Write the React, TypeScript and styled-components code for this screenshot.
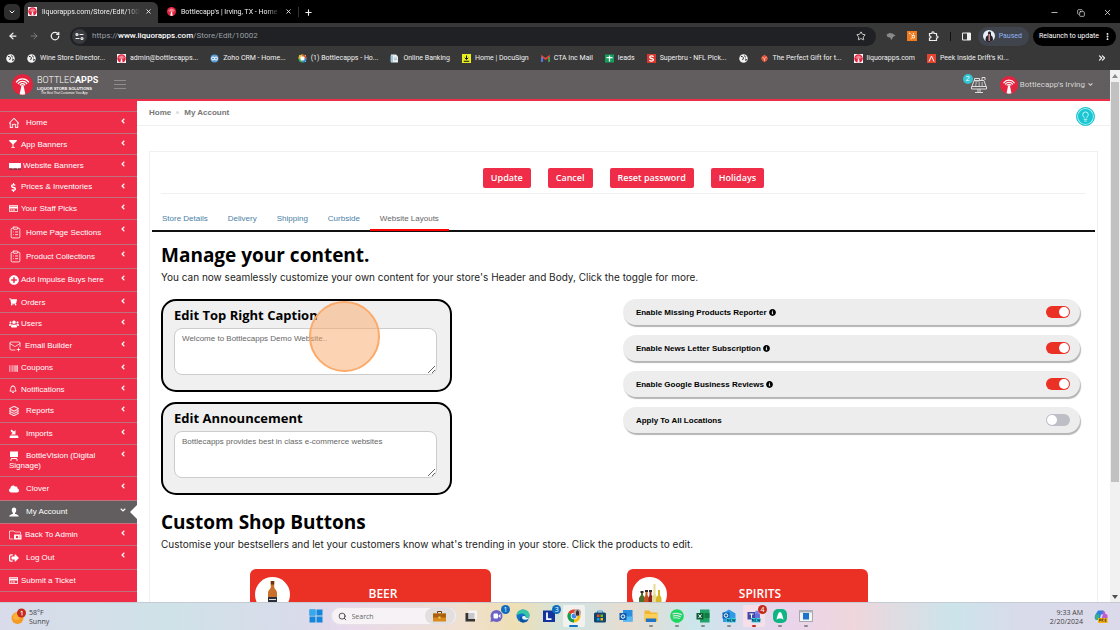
import React from "react";
import styled, { createGlobalStyle, css } from "styled-components";
import {
  FaAngleDown, FaAngleLeft, FaBarcode, FaCloud, FaDollarSign, FaGlassMartini, FaInfoCircle,
  FaPlusCircle, FaRegBell, FaRegCreditCard, FaShoppingCart, FaSignOutAlt, FaUsers, FaHubspot, FaSpotify,
} from "react-icons/fa";
import { SlHome, SlLayers } from "react-icons/sl";
import {
  ArrowLeft, ArrowRight, ChevronDown, ChevronsRight, Copy, Lightbulb, Minus, MoreVertical,
  Plus, RotateCw, Search, Star, X, ClipboardList, MailPlus,
} from "lucide-react";

const ui = `"Open Sans", "Noto Sans", sans-serif`;
const chromeUi = `Roboto, "Open Sans", sans-serif`;
const arial = `"Liberation Sans", Arial, sans-serif`;
const red = "#ef2d49";
const grey = "#625d5e";
const flame = "#eb3126";

const Global = createGlobalStyle`
  *, *::before, *::after { box-sizing: border-box; }
  body { margin: 0; background: #fff; font-family: ${arial}; }
  button, textarea, input { font: inherit; }
  button { border: 0; padding: 0; margin: 0; background: none; color: inherit; }
  a { color: inherit; text-decoration: none; }
  svg { display: block; flex: none; }
`;

const Desktop = styled.div`
  height: 100vh;
  display: flex;
  flex-direction: column;
  overflow: hidden;
`;

/* ---------- browser frame ---------- */

const TabStrip = styled.div`
  display: flex;
  align-items: flex-end;
  height: 23px;
  flex: none;
  padding-left: 4px;
  background: #000;
  color: #f2f2f2;
  font: 7px/10px ${chromeUi};
`;
const TabSearch = styled.button`
  display: grid;
  place-items: center;
  width: 16px;
  height: 16px;
  margin: 0 4px 3px 0;
  border-radius: 5px;
  background: #2e2e2e;
`;
const BrowserTab = styled.div<{ $active?: boolean }>`
  display: flex;
  align-items: center;
  gap: 5px;
  width: ${(p) => (p.$active ? 134 : 140)}px;
  height: 21px;
  padding: 0 6px 2px ${(p) => (p.$active ? 4 : 9)}px;
  border-radius: 6px 6px 0 0;
  background: ${(p) => (p.$active ? "#383838" : "transparent")};
`;
const TabTitle = styled.span`
  flex: 1;
  overflow: hidden;
  white-space: nowrap;
  mask-image: linear-gradient(90deg, #000 86%, transparent);
`;
const NewTab = styled.button`
  height: 10px;
  margin-bottom: 6px;
  padding-left: 5px;
  border-left: 1px solid #333;
`;
const WindowControls = styled.div`
  display: flex;
  align-items: center;
  gap: 18px;
  margin: 0 8px 6px auto;
`;
const Toolbar = styled.div`
  display: flex;
  align-items: center;
  height: 26px;
  flex: none;
  padding: 0 4px 0 8px;
  background: #383838;
  color: #f2f2f2;
  font: 7px/10px ${chromeUi};
`;
const NavButtons = styled.div`
  display: flex;
  gap: 11px;
  margin-right: 10px;
`;
const Omnibox = styled.div`
  display: flex;
  align-items: center;
  flex: 1;
  height: 19px;
  padding: 0 10px 0 2px;
  border-radius: 10px;
  background: #202124;
  color: #9aa0a6;
  font-size: 8px;
`;
const SiteInfo = styled.button`
  display: grid;
  place-items: center;
  width: 15px;
  height: 15px;
  margin-right: 5px;
  border-radius: 8px;
  background: #383a3d;
`;
const Address = styled.span`
  flex: 1;
  b { font-weight: 500; color: #fff; }
`;
const Extensions = styled.div`
  display: flex;
  align-items: center;
  gap: 11px;
  margin: 0 7px 0 10px;
`;
const Divider = styled.i`
  width: 1px;
  height: 9px;
  background: #111;
`;
const Pill = styled.button<{ $dark?: boolean }>`
  display: flex;
  align-items: center;
  gap: 4px;
  height: 19px;
  margin-left: ${(p) => (p.$dark ? 4 : 0)}px;
  padding: 0 ${(p) => (p.$dark ? 4 : 7)}px 0 ${(p) => (p.$dark ? 6 : 5)}px;
  border-radius: 10px;
  background: ${(p) => (p.$dark ? "#000" : "#40444c")};
  color: ${(p) => (p.$dark ? "#fff" : "#8fb4f5")};
  white-space: nowrap;
`;
const Bookmarks = styled.nav`
  display: flex;
  align-items: center;
  gap: 12px;
  height: 21px;
  flex: none;
  padding: 0 13px 3px 6px;
  background: #383838;
  color: #f2f2f2;
  font: 7px/10px ${chromeUi};
  white-space: nowrap;
`;
const Bookmark = styled.a`
  display: flex;
  align-items: center;
  gap: 4px;
`;
const More = styled.button`
  margin-left: auto;
`;

/* ---------- site ---------- */

const Viewport = styled.div`
  display: flex;
  flex: 1;
  min-height: 0;
`;
const Site = styled.div`
  display: flex;
  flex-direction: column;
  flex: 1;
  min-width: 0;
  overflow: hidden;
`;
const Scrollbar = styled.div`
  display: flex;
  flex-direction: column;
  align-items: center;
  justify-content: space-between;
  width: 10px;
  padding: 4px 0 3px;
  background: #f1f1f1;
`;
const Thumb = styled.i`
  width: 8px;
  flex: 0 0 400px;
  margin: 4px 0 auto;
  background: #c1c1c1;
`;
const SiteHeader = styled.header`
  display: flex;
  align-items: center;
  height: 31px;
  flex: none;
  padding: 0 16px 0 12px;
  border-bottom: 2px solid ${red};
  background: ${grey};
  color: #d5d5d5;
  font: 8px/10px ${chromeUi};
`;
const Brand = styled.a`
  display: flex;
  align-items: center;
  gap: 4px;
  width: 102px;
  color: #fff;
`;
const Wordmark = styled.span`
  display: flex;
  flex-direction: column;
  white-space: nowrap;
  font: 300 9px/11px ${chromeUi};
  b { font-weight: 700; }
  small { font: 700 4px/5px ${arial}; }
  em { padding-left: 4px; font: 3px/4px ${arial}; }
`;
const Notifications = styled.button`
  position: relative;
  margin: 0 13px 0 auto;
`;
const Count = styled.span`
  position: absolute;
  left: -8px;
  top: -2px;
  width: 10px;
  height: 10px;
  border-radius: 5px;
  background: #32c5d2;
  color: #fff;
  font: 7px/10px ${arial};
  text-align: center;
`;
const Account = styled.button`
  display: flex;
  align-items: center;
  gap: 2px;
`;
const Columns = styled.div`
  display: flex;
  flex: 1;
  min-height: 0;
`;
const Sidebar = styled.nav`
  width: 137px;
  flex: none;
  padding-top: 10px;
  background: ${red};
  color: #fff;
  font-size: 8px;
  line-height: 9px;
`;
const line = "#c0707e";
const MenuItem = styled.a<{ $height: number; $active?: boolean }>`
  position: relative;
  display: flex;
  align-items: center;
  min-height: ${(p) => p.$height}px;
  padding: 0 10px 0 9px;
  border-top: 1px solid ${line};
  ${(p) => p.$active && css`
    background: ${grey};
    &::after {
      content: "";
      position: absolute;
      right: 0;
      top: 4px;
      border: 7px solid transparent;
      border-left-width: 0;
      border-right-color: #fff;
    }
  `}
`;
const MenuLabel = styled.span`
  flex: 1;
`;
const MenuIcon = styled.span<{ $width: number }>`
  display: inline-block;
  vertical-align: middle;
  width: ${(p) => p.$width}px;
`;
const Caret = styled.span`
  align-self: flex-start;
  padding-top: 5px;
`;
const MenuEnd = styled.div`
  border-top: 1px solid ${line};
`;
const Main = styled.main`
  flex: 1;
  min-width: 0;
  overflow: hidden;
`;
const Crumbs = styled.div`
  display: flex;
  align-items: center;
  gap: 5px;
  height: 25px;
  padding: 0 15px 2px 12px;
  border-bottom: 1px solid #f0f0f0;
  color: #777;
  font-size: 8px;
  font-weight: 700;
`;
const Dot = styled.i`
  width: 3px;
  height: 3px;
  border-radius: 2px;
  background: #ddd;
`;
const Tip = styled.button`
  display: grid;
  place-items: center;
  align-self: flex-start;
  flex: none;
  width: 19px;
  height: 19px;
  margin: 6px 0 0 auto;
  border-radius: 10px;
  border: 1px solid #19c6d2;
  background: #19c6d2;
  box-shadow: inset 0 0 0 1px #a8eef2;
  color: #d5fbfc;
`;
const Card = styled.section`
  margin: 25px 12px 0 12px;
  border: 1px solid #f0f0f0;
`;
const Actions = styled.div`
  display: flex;
  justify-content: center;
  gap: 17px;
  margin: 0 11px;
  padding: 16px 0 5px;
  border-bottom: 1px solid #f0f0f0;
`;
const Action = styled.button`
  height: 20px;
  padding: 0 8px;
  border-radius: 2px;
  background: ${red};
  color: #fff;
  font: 600 9px/20px ${ui};
`;
const Tabs = styled.div`
  display: flex;
  margin: 0 2px;
  padding-top: 13px;
  border-bottom: 2px solid #111;
  font-size: 8px;
`;
const Tab = styled.button<{ $active?: boolean }>`
  height: 24px;
  margin-bottom: -1px;
  padding: 0 10px;
  border: 0 solid ${(p) => (p.$active ? "#f00" : "transparent")};
  border-bottom-width: 2px;
  color: ${(p) => (p.$active ? "#666" : "#4a7fa8")};
`;
const Body = styled.div`
  padding: 0 11px;
`;
const Title = styled.h2`
  margin: 9px 0 0;
  color: #000;
  font: 700 19px/28px ${ui};
`;
const Lead = styled.p`
  margin: 0;
  color: #222;
  font: 10px/16px Inter, ${arial};
`;
const Settings = styled.div`
  display: grid;
  grid-template-columns: 7fr 11fr;
  gap: 171px;
  margin: 14px 6px 13px 0;
`;
const Stack = styled.div`
  display: flex;
  flex-direction: column;
  gap: 10px;
`;
const Editor = styled.div`
  position: relative;
  padding: 4px 13px 15px 11px;
  border: 2px solid #000;
  border-radius: 15px;
  background: #f0f0f0;
`;
const EditorLabel = styled.label`
  display: block;
  font: 700 13px/20px ${ui};
  color: #000;
`;
const EditorText = styled.textarea`
  display: block;
  width: 100%;
  height: 47px;
  margin-top: 3px;
  padding: 5px 7px;
  border: 1px solid #ccc;
  border-radius: 8px;
  background: #fff;
  color: #666;
  font-size: 8px;
  line-height: 10px;
  overflow: hidden;
`;
const ClickMark = styled.div`
  position: absolute;
  left: 146px;
  top: 0;
  width: 71px;
  height: 71px;
  border: 2px solid #fbaa6a;
  border-radius: 50%;
  background: rgba(250, 170, 105, 0.5);
  pointer-events: none;
`;
const Toggle = styled.label`
  display: flex;
  align-items: center;
  gap: 2px;
  height: 26px;
  padding: 0 10px 0 13px;
  border-radius: 13px;
  background: #ededed;
  box-shadow: 1px 2px 1px #b5b5b5;
  color: #000;
  font-size: 8px;
  font-weight: 700;
`;
const Switch = styled.input`
  appearance: none;
  width: 24px;
  height: 12px;
  margin: 0 0 0 auto;
  padding: 1px;
  border-radius: 6px;
  background: #bdbec6;
  &::before {
    content: "";
    display: block;
    width: 10px;
    height: 10px;
    border-radius: 5px;
    background: #fff;
  }
  &:checked { background: ${flame}; }
  &:checked::before { margin-left: 12px; }
`;
const Shops = styled.div`
  display: flex;
  gap: 136px;
  margin-top: 17px;
  padding-left: 89px;
`;
const Shop = styled.button`
  display: flex;
  align-items: center;
  width: 241px;
  height: 50px;
  padding: 0 15px 0 5px;
  border-radius: 6px;
  background: ${flame};
  color: #fff;
  font: 600 12px/16px ${ui};
`;
const ShopName = styled.span`
  flex: 1;
`;

/* ---------- taskbar ---------- */

const Taskbar = styled.footer`
  display: grid;
  grid-template-columns: 1fr auto 1fr;
  align-items: center;
  height: 28px;
  flex: none;
  border-top: 1px solid #c5cbd3;
  background: linear-gradient(90deg, #d9dbea 0, #cfe2e8 15%, #d9dbea 27%, #e8d9ec 31%, #f0e0d0 41%, #efdfb4 46%, #cfe4e4 51%, #e8dccf 56%, #cbe6ec 62%, #ead4ec 70%, #efd6dc 76%, #cbe4ea 85%, #d9dbea 91%, #dcdaea);
  color: #444;
  font: 7px/9px ${ui};
`;
const Weather = styled.div`
  display: flex;
  align-items: center;
  gap: 3px;
  padding-left: 11px;
`;
const Apps = styled.div`
  display: flex;
  align-items: center;
  padding: 0 0 1px 7px;
`;
const SearchBox = styled.label`
  display: flex;
  align-items: center;
  gap: 5px;
  width: 126px;
  height: 18px;
  margin: 0 2px 0 8px;
  padding: 0 1px 0 6px;
  border-radius: 9px;
  background: #f6f2f5;
  border: 1px solid #e6e0e6;
  color: #222;
  input {
    flex: 1;
    min-width: 0;
    padding: 0;
    border: 0;
    outline: 0;
    background: none;
    &::placeholder { color: #666; }
  }
`;
const Case = styled.span`
  display: grid;
  place-items: center;
  width: 30px;
  height: 16px;
  border-radius: 8px;
  background: #e4dfdf;
`;
const Dock = styled.div`
  display: flex;
  width: 360px;
`;
const DockApp = styled.button<{ $mark?: string; $bg?: string }>`
  position: relative;
  display: grid;
  place-items: center;
  flex: 1;
  height: 22px;
  border-radius: 3px;
  background: ${(p) => p.$bg ?? "transparent"};
  background-clip: content-box;
  padding: 0 2px;
  ${(p) => p.$mark && css`
    &::after {
      content: "";
      position: absolute;
      left: calc(50% - ${p.$mark === "#1275c4" ? 5 : 2}px);
      bottom: 0;
      width: ${p.$mark === "#1275c4" ? 9 : 4}px;
      height: 2px;
      border-radius: 1px;
      background: ${p.$mark};
    }
  `}
`;
const Badge = styled.b<{ $color: string }>`
  position: absolute;
  right: 0;
  top: 0;
  width: 9px;
  height: 9px;
  border-radius: 5px;
  background: ${(p) => p.$color};
  color: #fff;
  font: 7px/9px ${ui};
  text-align: center;
`;
const Tray = styled.div`
  display: flex;
  justify-content: flex-end;
  align-items: center;
  gap: 11px;
  padding-right: 12px;
  text-align: right;
`;

/* ---------- drawings ---------- */

const Globe = () => (
  <svg width="9" height="9" viewBox="0 0 18 18"><circle cx="9" cy="9" r="8.5" fill="#f1f1f1" /><path d="M4 5c3 0 5 1 5 3s-2 2-2 4M11 3c0 2 1 3 3 3M12 10l3 1-2 3" fill="none" stroke="#333" strokeWidth="2" /></svg>
);
const Tower = ({ size = 9, square = false }: { size?: number; square?: boolean }) => (
  <svg width={size} height={size} viewBox="0 0 20 20">
    {square ? <rect width="20" height="20" fill="#fff" /> : null}
    <circle cx="10" cy="10" r={square ? 9.4 : 10} fill="#e5233f" />
    <g fill="none" stroke="#fff" strokeWidth="1.3" strokeLinecap="round">
      <path d="M4.2 7.6C7 3.6 13 3.6 15.8 7.6M6 9C8 6.3 12 6.3 14 9M7.9 10.2c1.2-1.4 3-1.4 4.2 0" />
    </g>
    <path d="M9.1 10.4h1.8l1.8 8.9a10 10 0 0 1-5.4 0z" fill="#fff" />
  </svg>
);
const Mark = ({ kind }: { kind: string }) => {
  const art: Record<string, React.ReactNode> = {
    zoho: <><circle cx="9" cy="9" r="8" fill="#5b9bd5" /><path d="M3 9a3 3 0 0 1 6 0 3 3 0 0 0 6 0 3 3 0 0 0-6 0 3 3 0 0 1-6 0z" fill="none" stroke="#fff" strokeWidth="2" /></>,
    ring: <><path d="M2 2h14v14H9z" fill="#fff" /><circle cx="9" cy="9" r="8" fill="#3cae5a" /><path d="M9 1a8 8 0 0 1 8 8H9z" fill="#e14b3b" /><path d="M1 9a8 8 0 0 1 8-8v8z" fill="#f3b62c" /><path d="M9 17a8 8 0 0 0 8-8H9z" fill="#357fd0" /><rect x="5" y="5" width="8" height="8" rx="2" fill="#fff" /></>,
    bank: <><path d="M2 1h10l4 4v12H2z" fill="#e8eef2" /><path d="M1 3h5v13H1z" fill="#9fc3d8" /><path d="M8 8h6M8 11h6" stroke="#9ab" strokeWidth="1.4" /></>,
    docu: <><path d="M0 0h18v18H0z" fill="#e9ee1f" /><path d="M9 3v7M5.500 7.500L9 11l3.500-3.500M3.500 14.500h11" stroke="#111" strokeWidth="2" fill="none" /></>,
    gmail: <><path d="M2 15V5l7 5 7-5v10" fill="none" stroke="#ea4335" strokeWidth="3.400" /><path d="M2 16V6" stroke="#4285f4" strokeWidth="3.400" /><path d="M16 16V6" stroke="#34a853" strokeWidth="3.400" /></>,
    sheet: <><path d="M0 1h18v16H0z" fill="#12a05c" /><path d="M3 7h12M9 3v12" stroke="#fff" strokeWidth="2.500" /></>,
    bru: <><path d="M0 0h18v18H0z" fill="#d9372c" /><path d="M13 5.500C11 3 5.500 3.500 5.500 6.300c0 3.400 7.300 2 7.300 5.300 0 3-5.800 3.400-8 .6" fill="none" stroke="#fff" strokeWidth="2.600" /></>,
    gift: <><path d="M9 1l7 8-7 8-7-8z" fill="#e0563c" /><circle cx="9" cy="9" r="6" fill="#e0563c" /><path d="M5 7l4 2 4-3M9 9v5" stroke="#f5b6a4" strokeWidth="2" fill="none" /></>,
    drift: <><path d="M0 0h18v18H0z" fill="#e5432e" /><path d="M4 15L9 4l5 11" fill="none" stroke="#fff" strokeWidth="2" /></>,
  };
  return <svg width="9" height="9" viewBox="0 0 18 18">{art[kind]}</svg>;
};
const Register = () => (
  <svg width="16" height="17" viewBox="0 0 32 34" fill="none" stroke="#dcdcdc" strokeWidth="2">
    <path d="M6 9h20l4 12H2zM1 21h30v5H1zM14 26v6M18 26v6M8 33h16M22 9V3h6v5M7 5h10v5H7z" /><path d="M9 14h3M15 14h3M21 14h3M8 18h3M15 18h3M21 18h3" />
  </svg>
);
const Screen = () => (
  <svg width="12" height="8" viewBox="0 0 24 16"><path d="M0 2h24v11H0z" fill="#fff" /><path d="M0 14h24" stroke="#333" strokeWidth="2" strokeDasharray="7 2" /></svg>
);
const Import = () => (
  <svg width="10" height="10" viewBox="0 0 20 20" fill="#fff"><path d="M5 1l5 4 3-3v9H4l3-3-4-4zM2 13h16l1 5H1z" /></svg>
);
const Signage = () => (
  <svg width="10" height="10" viewBox="0 0 20 20" fill="#fff"><path d="M2 1h16v11H2zM4 14h12v2H4zM2 17h5l-2 2H2zM13 17h5v2h-3z" /></svg>
);
const Person = () => (
  <svg width="10" height="10" viewBox="0 0 20 20" fill="#fff"><path d="M10 1c3 0 4.500 2 4.500 5S13 11 12 12v1.500c1 1 7 1.500 7.500 5.500H.5C1 15 7 14.500 8 13.500V12C7 11 5.500 9 5.500 6S7 1 10 1z" /></svg>
);
const Admin = () => (
  <svg width="13" height="10" viewBox="0 0 26 20"><path d="M9 18H1V2h9l2 2h11v4" fill="none" stroke="#fff" strokeWidth="1.400" /><path d="M10 9h15v10H10z" fill="#fff" /><circle cx="16" cy="14" r="2.500" fill={red} /><path d="M20 12h3M20 15h3" stroke={red} /></svg>
);
const Bottle = () => (
  <svg width="35" height="35" viewBox="0 0 35 35"><circle cx="17.500" cy="17.500" r="17.500" fill="#fff" /><path d="M15.800 4h3.400v6c0 2 2.800 3 2.800 6v16h-9V16c0-3 2.800-4 2.800-6z" fill="#c9702a" /><path d="M15.800 4h3.400v3.500h-3.400z" fill="#6b3318" /><path d="M13 20h9v7h-9z" fill="#2b2f3c" /><path d="M14 22.500h7" stroke="#ddd" /></svg>
);
const Bottles = () => (
  <svg width="35" height="35" viewBox="0 0 35 35"><circle cx="17.500" cy="17.500" r="17.500" fill="#fff" />
    <path d="M9 15h2v3l2 3v11H7V21l2-3z" fill="#49702c" /><path d="M13.500 14h2v4l1.500 3v11h-5V21l1.500-3z" fill="#c6541f" /><path d="M17.500 15h2v3l2 3v11h-5V21l1-3z" fill="#8c1f22" /><path d="M21.500 7h2v10l1.500 3v12h-5V20l1.500-3z" fill="#e6dc8e" /><path d="M26 13h2v5l1.500 3v9H24v-9l2-3z" fill="#d8b62a" /><path d="M8.500 14h3v2h-3zM17 13h3v2h-3zM13 13h3v2h-3z" fill="#3a2a24" /></svg>
);
const Sun = () => (
  <svg width="15" height="17" viewBox="0 0 30 34"><circle cx="13" cy="20" r="12" fill="#f59a23" /><circle cx="11" cy="17" r="7" fill="#fbb03b" /><circle cx="21" cy="10" r="9" fill="#c42b1c" /><path d="M19 8l3-2v9" stroke="#fff" strokeWidth="1.800" fill="none" /></svg>
);
const Copilot = () => (
  <svg width="14" height="15" viewBox="0 0 28 30"><path d="M8 3h9c3 0 4 4 5 7l-8 1-3 11H6c-4 0-6-4-4-9z" fill="#2f7fe0" /><path d="M17 3c4 0 5 3 6 7 4 0 5 3 4 7l-2 6H14l4-13z" fill="#c15bd0" /><path d="M3 11l8 0-3 11c-5 1-7-4-5-11z" fill="#36b37e" /><path d="M8 18h19v10H8z" fill="#f6b21b" /><path d="M11 25v-5h3v3h-3M16 25v-5h3l-3 3 3 2M25 20h-3v5h3M22 22.500h3" fill="none" stroke="#4a3208" strokeWidth="1.200" /></svg>
);
const Logo = ({ kind }: { kind: string }) => {
  const art: Record<string, React.ReactNode> = {
    start: <><path d="M1 1h12v12H1zM15 1h12v12H15zM1 15h12v12H1zM15 15h12v12H15z" fill="#1486dc" /><path d="M1 1h12v12H1z" fill="#35a8ee" /></>,
    tasks: <><path d="M9 3h17v17H9z" fill="#f5f5f5" /><path d="M3 8h6v12h13v5H3z" fill="#333" /><path d="M9 8h12v12H9z" fill="#c8c8c8" /></>,
    chat: <><circle cx="13" cy="14" r="12" fill="#6b63c8" /><path d="M2 18l-1 8 8-2z" fill="#6b63c8" /><rect x="7" y="9" width="9" height="10" rx="2" fill="#fff" /><path d="M17 13l4-3v8l-4-3z" fill="#fff" /></>,
    edge: <><circle cx="14" cy="14" r="13" fill="#1473c8" /><path d="M1 13C2 5 8 1 14 1c8 0 13 6 13 11 0 4-3 6-7 6 0-6-3-9-8-9-5 0-9 2-11 4z" fill="#38c7a5" /><path d="M11 14c-1 6 4 9 9 9 2 0 4 0 5-1-2 3-6 5-11 5C7 27 5 17 11 14z" fill="#0f4f9c" /><path d="M12 17c0-4 8-5 8 1 4 0 6-1 7-3 0 7-14 9-15 2z" fill="#e8f3f6" /></>,
    L: <><path d="M2 3h24v23H2z" fill="#13349c" /><path d="M10 7v13h9" stroke="#fff" strokeWidth="3.500" fill="none" /></>,
    chrome: <><circle cx="14" cy="14" r="13" fill="#f4c20d" /><path d="M14 14L2.700 7.500A13 13 0 0 1 25.300 7.500z" fill="#db4437" /><path d="M14 14L2.700 7.500A13 13 0 0 0 14 27z" fill="#0f9d58" /><circle cx="14" cy="14" r="6.500" fill="#fff" /><circle cx="14" cy="14" r="5" fill="#4285f4" /><circle cx="21" cy="7" r="7" fill="#b9a9a4" /><path d="M18 13V5l3-3 3 3v8z" fill="#3a2c30" /></>,
    store: <><path d="M9 8V4h10v4" stroke="#3aa0e8" strokeWidth="2" fill="none" /><rect x="2" y="7" width="24" height="20" rx="3" fill="#12456e" /><path d="M8 11h5v5H8z" fill="#f25022" /><path d="M15 11h5v5h-5z" fill="#7fba00" /><path d="M8 18h5v5H8z" fill="#00a4ef" /><path d="M15 18h5v5h-5z" fill="#ffb900" /></>,
    outlook: <><path d="M8 2h19v23H8z" fill="#2a8fe0" /><path d="M8 15h19v10H8z" fill="#55b9f5" /><path d="M1 8h14v14H1z" fill="#0f5fb0" /><circle cx="8" cy="15" r="3.500" stroke="#fff" strokeWidth="2" fill="none" /></>,
    folder: <><path d="M1 3h10l3 4h13v18H1z" fill="#f2b632" /><path d="M1 10h26v9H1z" fill="#fbd05a" /><path d="M4 19h20v7H4z" fill="#2274c8" /></>,
    excel: <><path d="M8 1h19v26H8z" fill="#21a366" /><path d="M17 8h10v10H17z" fill="#107c41" /><path d="M1 8h14v13H1z" fill="#0e5c33" /><path d="M5 11l6 7M11 11l-6 7" stroke="#fff" strokeWidth="2" /></>,
    newmail: <><path d="M2 8L14 1l13 8v17H2z" fill="#2f9ae8" /><path d="M1 7h14v12H1z" fill="#0f5fb0" /><circle cx="8" cy="13" r="3.500" stroke="#fff" strokeWidth="2" fill="none" /><path d="M9 18h18v9H9z" fill="#36d3e8" /><path d="M11 25v-5l3 5v-5M19 20h-2.500v5H19M21 20l1 5 1.500-4 1.500 4 1-5" fill="none" stroke="#0a3550" strokeWidth="1.400" /></>,
    teams: <><circle cx="20" cy="7" r="4" fill="#7b83eb" /><path d="M10 9h16v12H10z" fill="#6a70d8" /><path d="M1 6h15v15H1z" fill="#4049a8" /><path d="M5 10h8M9 10v8" stroke="#fff" strokeWidth="2" /><path d="M9 18h18v9H9z" fill="#36d3e8" /><path d="M11 25v-5l3 5v-5M19 20h-2.500v5H19M21 20l1 5 1.500-4 1.500 4 1-5" fill="none" stroke="#0a3550" strokeWidth="1.400" /></>,
    a: <><rect width="28" height="28" rx="10" fill="#0fb583" /><path d="M7 21C9 12 11 6 14 6s5 6 7 15c-3-3-11-3-14 0z" fill="#fff" /></>,
    window: <><path d="M1 3h26v22H1z" fill="#f5f5f5" stroke="#8a929a" strokeWidth="1.500" /><path d="M1 3h26v4H1z" fill="#aeb4ba" /><path d="M8 8h12v13H8z" fill="#1c74cc" /></>,
  };
  return <svg width="14" height="14" viewBox="0 0 28 28">{art[kind]}</svg>;
};

/* ---------- data ---------- */

const bookmarks: [React.ReactNode, string][] = [
  [<Globe />, ""],
  [<Globe />, "Wine Store Director..."],
  [<Tower square />, "admin@bottlecapps..."],
  [<Mark kind="zoho" />, "Zoho CRM - Home..."],
  [<Mark kind="ring" />, "(1) Bottlecapps - Ho..."],
  [<Mark kind="bank" />, "Online Banking"],
  [<Mark kind="docu" />, "Home | DocuSign"],
  [<Mark kind="gmail" />, "CTA Inc Mail"],
  [<Mark kind="sheet" />, "leads"],
  [<Mark kind="bru" />, "Superbru - NFL Pick..."],
  [<Globe />, ""],
  [<Mark kind="gift" />, "The Perfect Gift for t..."],
  [<Tower square />, "liquorapps.com"],
  [<Mark kind="drift" />, "Peek Inside Drift's Ki..."],
];

type Entry = { name: string; icon: React.ReactNode; height: number; icw: number; active?: boolean };
const menu: Entry[] = [
  { name: "Home", icon: <SlHome size={10} strokeWidth={30} stroke="#fff" />, height: 22, icw: 17 },
  { name: "App Banners", icon: <FaGlassMartini size={8} />, height: 21, icw: 12 },
  { name: "Website Banners", icon: <Screen />, height: 22, icw: 14 },
  { name: "Prices & Inventories", icon: <FaDollarSign size={9} />, height: 21, icw: 12 },
  { name: "Your Staff Picks", icon: <FaRegCreditCard size={9} />, height: 22, icw: 12 },
  { name: "Home Page Sections", icon: <ClipboardList size={13} strokeWidth={1.5} />, height: 25, icw: 17 },
  { name: "Product Collections", icon: <ClipboardList size={13} strokeWidth={1.5} />, height: 24, icw: 17 },
  { name: "Add Impulse Buys here", icon: <FaPlusCircle size={10} />, height: 23, icw: 12 },
  { name: "Orders", icon: <FaShoppingCart size={8} />, height: 21, icw: 12 },
  { name: "Users", icon: <FaUsers size={10} />, height: 22, icw: 12 },
  { name: "Email Builder", icon: <MailPlus size={12} strokeWidth={1.5} />, height: 23, icw: 16 },
  { name: "Coupons", icon: <FaBarcode size={9} />, height: 21, icw: 12 },
  { name: "Notifications", icon: <FaRegBell size={8} />, height: 21, icw: 12 },
  { name: "Reports", icon: <SlLayers size={10} strokeWidth={30} stroke="#fff" />, height: 23, icw: 17 },
  { name: "Imports", icon: <Import />, height: 22, icw: 17 },
  { name: "BottleVision (Digital Signage)", icon: <Signage />, height: 32, icw: 17 },
  { name: "Clover", icon: <FaCloud size={10} />, height: 24, icw: 17 },
  { name: "My Account", icon: <Person />, height: 23, icw: 17, active: true },
  { name: "Back To Admin", icon: <Admin />, height: 22, icw: 16 },
  { name: "Log Out", icon: <FaSignOutAlt size={10} />, height: 24, icw: 17 },
  { name: "Submit a Ticket", icon: <FaRegCreditCard size={9} />, height: 22, icw: 12 },
];

const editors = [
  { id: "caption", label: "Edit Top Right Caption", text: "Welcome to Bottlecapps Demo Website..", marked: true },
  { id: "announcement", label: "Edit Announcement", text: "Bottlecapps provides best in class e-commerce websites", marked: false },
];

const toggles = [
  { label: "Enable Missing Products Reporter", on: true },
  { label: "Enable News Letter Subscription", on: true },
  { label: "Enable Google Business Reviews", on: true },
  { label: "Apply To All Locations", on: false },
];

const apps: { kind: string; mark?: string; bg?: string; badge?: [string, string] }[] = [
  { kind: "tasks" },
  { kind: "chat", badge: ["1", "#0f6cbd"] },
  { kind: "edge" },
  { kind: "L", badge: ["3", "#0f6cbd"] },
  { kind: "chrome", mark: "#1275c4", bg: "#f3f1f0" },
  { kind: "store" },
  { kind: "outlook" },
  { kind: "folder", mark: "#8a8a8a" },
  { kind: "spotify", mark: "#8a8a8a" },
  { kind: "excel", mark: "#8a8a8a" },
  { kind: "newmail", mark: "#8a8a8a" },
  { kind: "teams", mark: "#c42b1c", bg: "#f6dfe8", badge: ["4", "#c42b1c"] },
  { kind: "a", mark: "#8a8a8a" },
  { kind: "window", mark: "#8a8a8a" },
];

function BrowserFrame() {
  return (
    <>
      <TabStrip>
        <TabSearch aria-label="Search tabs"><ChevronDown size={8} strokeWidth={3} /></TabSearch>
        <BrowserTab $active><Tower square /><TabTitle>liquorapps.com/Store/Edit/10002</TabTitle><X size={7} strokeWidth={3} /></BrowserTab>
        <BrowserTab><Tower /><TabTitle>Bottlecapp's | Irving, TX - Home</TabTitle><X size={7} strokeWidth={3} /></BrowserTab>
        <NewTab aria-label="New tab"><Plus size={9} strokeWidth={3} /></NewTab>
        <WindowControls><Minus size={9} /><Copy size={8} /><X size={9} /></WindowControls>
      </TabStrip>
      <Toolbar>
        <NavButtons>
          <ArrowLeft size={10} strokeWidth={3} /><ArrowRight size={10} color="#888" /><RotateCw size={10} strokeWidth={3} />
        </NavButtons>
        <Omnibox>
          <SiteInfo aria-label="Site information">
            <svg width="9" height="9" viewBox="0 0 18 18" fill="none" stroke="#eee" strokeWidth="2.400"><circle cx="4" cy="5" r="2" /><path d="M9 5h8M1 13h8" /><circle cx="14" cy="13" r="2" /></svg>
          </SiteInfo>
          <Address>https://<b>www.liquorapps.com</b>/Store/Edit/10002</Address>
          <Star size={10} color="#eee" />
        </Omnibox>
        <Extensions>
          <svg width="10" height="10" viewBox="0 0 20 20" fill="#8a8a8a"><path d="M1 7l6-3 6 1 6 4-5 3-3 6-3-5-5-1z" /></svg>
          <svg width="10" height="10" viewBox="0 0 20 20"><rect width="20" height="20" fill="#f07b1d" /><FaHubspot x={3} y={3} size={14} color="#fff" /></svg>
          <svg width="11" height="11" viewBox="0 0 22 22" fill="none" stroke="#eee" strokeWidth="2.400"><path d="M3 5h5V3.500a2 2 0 0 1 4 0V5h5v5h1a2 2 0 0 1 0 4h-1v5H3v-5h1a2 2 0 0 0 0-4H3z" /></svg>
          <Divider />
          <svg width="9" height="9" viewBox="0 0 18 18"><path d="M1 2h16v14H1z" fill="none" stroke="#eee" strokeWidth="2" /><path d="M10 2h7v14h-7z" fill="#eee" /></svg>
        </Extensions>
        <Pill>
          <svg width="12" height="12" viewBox="0 0 24 24"><circle cx="12" cy="12" r="12" fill="#e9eef5" /><path d="M5 22c0-8 2-11 5-11V6c0-4 6-4 6 0v5c3 1 4 4 4 10-4 4-11 4-15 1z" fill="#23232f" /><path d="M11 8h3v14h-3z" fill="#d68a86" /></svg>
          Paused
        </Pill>
        <Pill $dark>Relaunch to update <MoreVertical size={9} strokeWidth={3} /></Pill>
      </Toolbar>
      <Bookmarks aria-label="Bookmarks">
        {bookmarks.map(([icon, name], i) => <Bookmark href="#" key={i} aria-label={name || "Bookmark"}>{icon}{name}</Bookmark>)}
        <More aria-label="More bookmarks"><ChevronsRight size={10} strokeWidth={3} /></More>
      </Bookmarks>
    </>
  );
}

function Header() {
  return (
    <SiteHeader>
      <Brand href="#">
        <Tower size={21} />
        <Wordmark>
          <span>BOTTLEC<b>APPS</b></span>
          <small>LIQUOR STORE SOLUTIONS</small>
          <em>The Best That Customize Your App</em>
        </Wordmark>
      </Brand>
      <button aria-label="Toggle menu">
        <svg width="12" height="9" viewBox="0 0 12 9" stroke="#8f8b8c"><path d="M0 .5h12M0 4.500h12M0 8.500h12" /></svg>
      </button>
      <Notifications aria-label="Orders"><Register /><Count>2</Count></Notifications>
      <Account><Tower size={18} />Bottlecapp's Irving <FaAngleDown size={7} /></Account>
    </SiteHeader>
  );
}

function Menu() {
  return (
    <Sidebar>
      {menu.map((m) => (
        <MenuItem href="#" key={m.name} $height={m.height} $active={m.active}>
          <MenuLabel><MenuIcon $width={m.icw}>{m.icon}</MenuIcon>{m.name}</MenuLabel>
          {m.name !== "Submit a Ticket" && <Caret>{m.active ? <FaAngleDown size={8} /> : <FaAngleLeft size={8} />}</Caret>}
        </MenuItem>
      ))}
      <MenuEnd />
    </Sidebar>
  );
}

function Content() {
  return (
    <Main>
      <Crumbs>
        <a href="#">Home</a><Dot /><a href="#">My Account</a>
        <Tip aria-label="Tips"><Lightbulb size={11} strokeWidth={2} /></Tip>
      </Crumbs>
      <Card>
        <Actions>
          {["Update", "Cancel", "Reset password", "Holidays"].map((a) => <Action key={a}>{a}</Action>)}
        </Actions>
        <Tabs>
          {["Store Details", "Delivery", "Shipping", "Curbside", "Website Layouts"].map((t) => <Tab key={t} $active={t === "Website Layouts"}>{t}</Tab>)}
        </Tabs>
        <Body>
          <Title>Manage your content.</Title>
          <Lead>You can now seamlessly customize your own content for your store's Header and Body, Click the toggle for more.</Lead>
          <Settings>
            <Stack>
              {editors.map((e) => (
                <Editor key={e.id}>
                  <EditorLabel htmlFor={e.id}>{e.label}</EditorLabel>
                  <EditorText id={e.id} defaultValue={e.text} />
                  {e.marked && <ClickMark />}
                </Editor>
              ))}
            </Stack>
            <Stack>
              {toggles.map((t) => (
                <Toggle key={t.label}>
                  {t.label}{t.on && <FaInfoCircle size={7} />}
                  <Switch type="checkbox" role="switch" defaultChecked={t.on} />
                </Toggle>
              ))}
            </Stack>
          </Settings>
          <Title>Custom Shop Buttons</Title>
          <Lead>Customise your bestsellers and let your customers know what's trending in your store. Click the products to edit.</Lead>
          <Shops>
            <Shop><Bottle /><ShopName>BEER</ShopName></Shop>
            <Shop><Bottles /><ShopName>SPIRITS</ShopName></Shop>
          </Shops>
        </Body>
      </Card>
    </Main>
  );
}

function WindowsBar() {
  return (
    <Taskbar>
      <Weather><Sun /><span>58°F<br />Sunny</span></Weather>
      <Apps>
        <button aria-label="Start"><Logo kind="start" /></button>
        <SearchBox>
          <Search size={9} />
          <input placeholder="Search" aria-label="Search" />
          <Case><svg width="13" height="11" viewBox="0 0 26 22"><path d="M9 5V1h8v4" fill="none" stroke="#6b3d10" strokeWidth="2" /><path d="M0 5h26v16H0z" fill="#d98a1c" /><path d="M0 5h26v8H0z" fill="#a8610f" /><path d="M11 11h4v4h-4z" fill="#f8d25a" /></svg></Case>
        </SearchBox>
        <Dock>
          {apps.map((a) => (
            <DockApp key={a.kind} $mark={a.mark} $bg={a.bg} aria-label={a.kind}>
              {a.kind === "spotify" ? <FaSpotify size={14} color="#1ed760" /> : <Logo kind={a.kind} />}
              {a.badge && <Badge $color={a.badge[1]}>{a.badge[0]}</Badge>}
            </DockApp>
          ))}
        </Dock>
      </Apps>
      <Tray><span>9:33 AM<br />2/20/2024</span><Copilot /></Tray>
    </Taskbar>
  );
}

export default function App() {
  return (
    <Desktop>
      <Global />
      <BrowserFrame />
      <Viewport>
        <Site>
          <Header />
          <Columns><Menu /><Content /></Columns>
        </Site>
        <Scrollbar>
          <svg width="6" height="4" viewBox="0 0 6 4"><path d="M0 4l3-4 3 4z" fill="#8a8a8a" /></svg>
          <Thumb />
          <svg width="6" height="4" viewBox="0 0 6 4"><path d="M0 0l3 4 3-4z" fill="#505050" /></svg>
        </Scrollbar>
      </Viewport>
      <WindowsBar />
    </Desktop>
  );
}
